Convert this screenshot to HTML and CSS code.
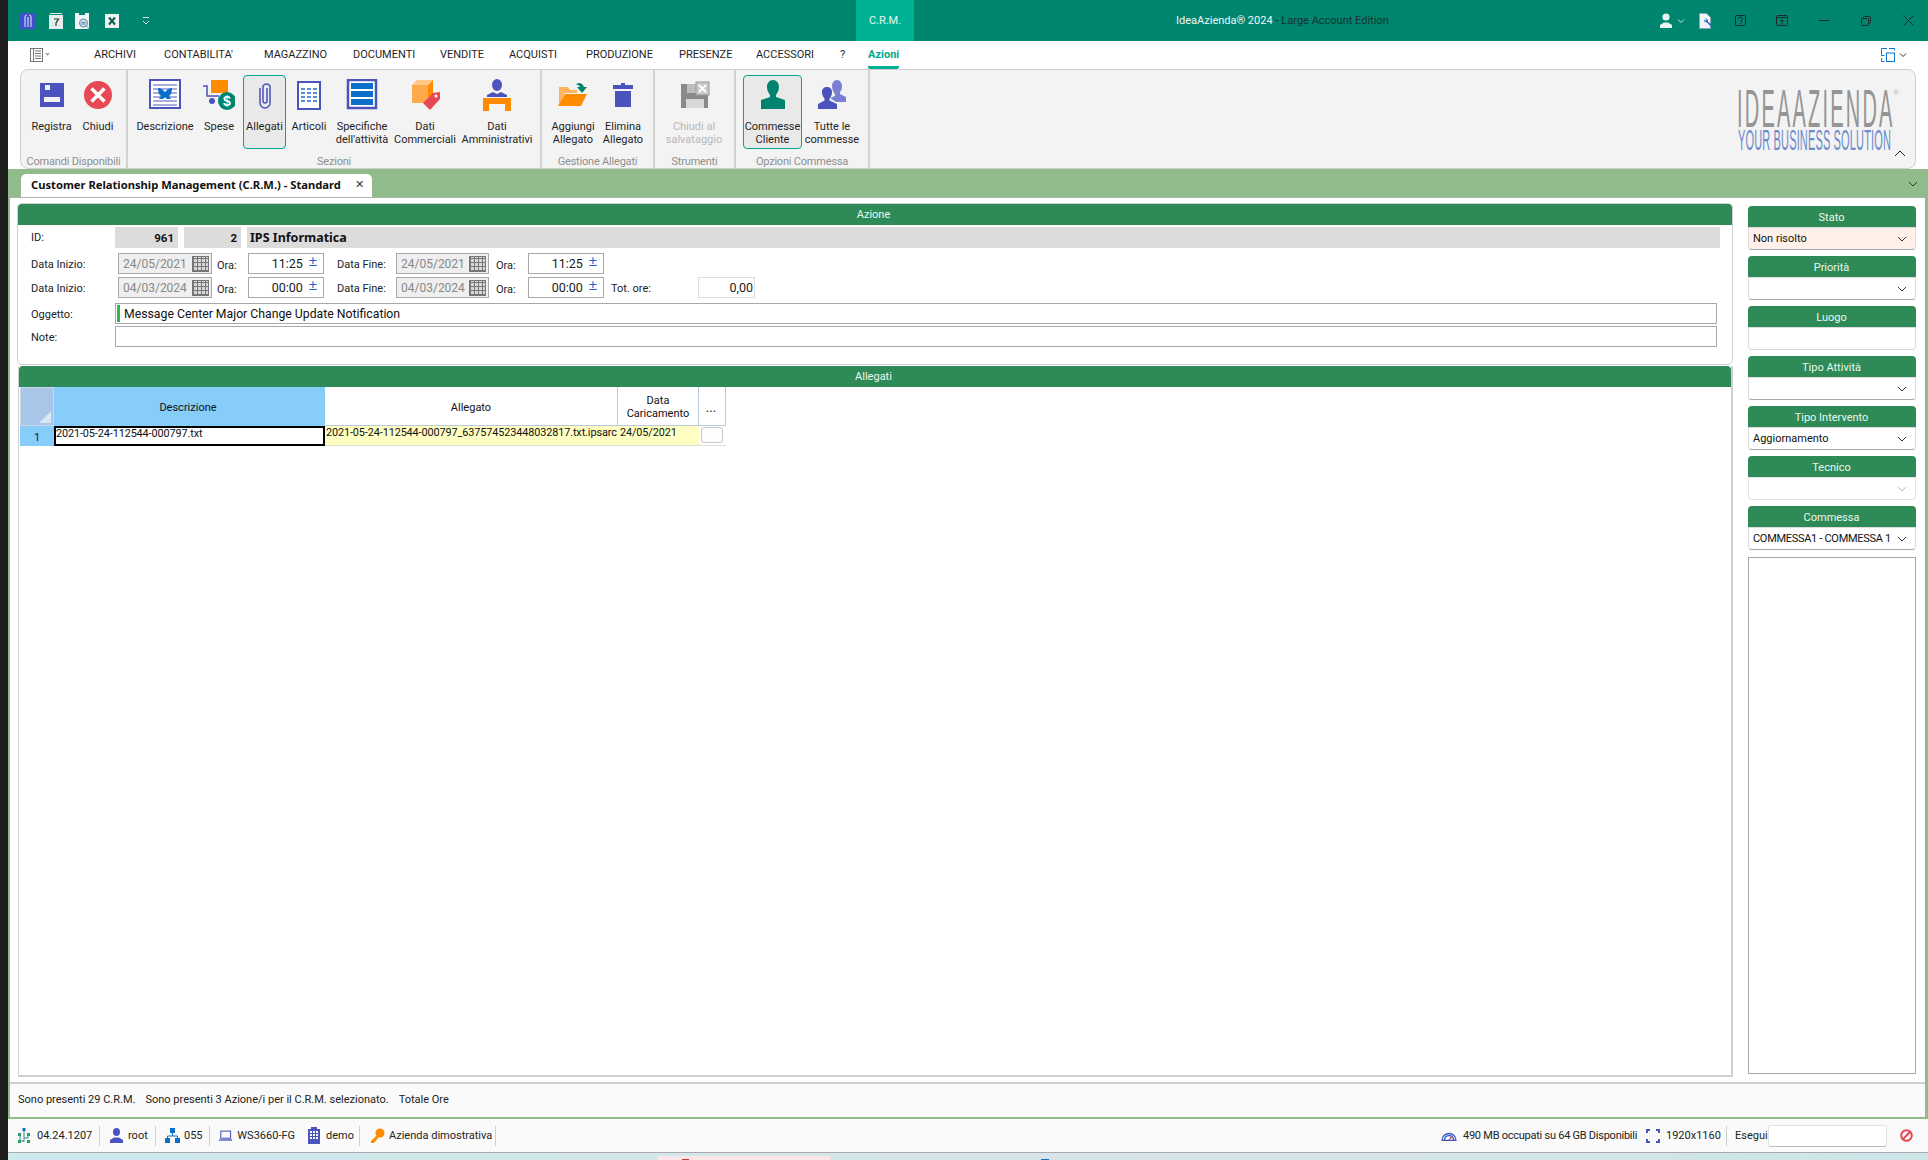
FILE: index.html
```html
<!DOCTYPE html>
<html lang="it">
<head>
<meta charset="utf-8">
<title>IdeaAzienda</title>
<link rel="stylesheet" href="styles.css">
</head>
<body>
<div class="screen">
  <div class="edge"></div>
  <div class="app">
    <header class="titlebar">
      <div class="quick">
        <svg class="q" width="16" height="16" viewBox="0 0 16 16"><rect width="16" height="16" fill="#3f51c8"/><path d="M5 14V4a2 2 0 0 1 2-2M8 14V4M11 14V4a2 2 0 0 0-2-2" stroke="#cfd4f5" fill="none" stroke-width="1.2"/></svg>
        <svg class="q q2" width="14" height="16" viewBox="0 0 14 16"><path d="M0 2h14v14H0z" fill="#e4eeec"/><path d="M1 .5h12" stroke="#e4eeec"/><path d="M5 6h4.500L7 10v3" stroke="#333" fill="none" stroke-width="1.200"/></svg>
        <svg class="q q3" width="16" height="18" viewBox="0 0 16 18"><path d="M0 0h4v2h6V0h4v16H0z" fill="#f2f5f5"/><circle cx="8.500" cy="10" r="4" fill="#cfe0e8" stroke="#5b8ab0"/><path d="M6.500 9.500h4M6.500 11h4M11.500 13l3 3" stroke="#5b8ab0"/></svg>
        <svg class="q q4" width="14" height="14" viewBox="0 0 14 14"><rect width="14" height="14" fill="#eef3f2"/><path d="M4 3.500l6 7M10 3.500l-6 7" stroke="#0f5c4c" stroke-width="2"/></svg>
        <svg class="q q5" width="10" height="10" viewBox="0 0 10 10"><path d="M2 1.500h6M2 5l3 3 3-3" stroke="#d9ece8" fill="none"/></svg>
      </div>
      <div class="module">C.R.M.</div>
      <div class="apptitle"><span class="light">IdeaAzienda® 2024</span> - Large Account Edition</div>
      <div class="winbtns">
        <svg width="12" height="15" viewBox="0 0 12 15"><circle cx="6" cy="4" r="3.600" fill="#e8f3f0"/><path d="M0 15v-3l4-2.500h4l4 2.500v3z" fill="#e8f3f0"/></svg>
        <svg width="8" height="6" viewBox="0 0 8 6"><path d="M1 1.500l3 3 3-3" stroke="#cfe5e0" fill="none"/></svg>
        <svg width="14" height="16" viewBox="0 0 14 16"><path d="M.5.500h7l4 4v11h-11z" fill="#f2f5f8" stroke="#8fa3b5"/><path d="M5 6.500a2.500 2.500 0 0 0 3 3l4 4.500 1.500-1.500-4.500-4a2.500 2.500 0 0 0-3-3l1.500 1.500-.5 1z" fill="#2f6fc0"/></svg>
        <svg width="11" height="11" viewBox="0 0 11 11"><rect x=".5" y=".5" width="10" height="10" rx="1" fill="none" stroke="#1c2a28"/><path d="M3.500 4a2 2 0 1 1 2.500 2v1M5.500 8v1" stroke="#1c2a28" fill="none"/></svg>
        <svg width="12" height="11" viewBox="0 0 12 11"><rect x=".5" y=".5" width="11" height="10" rx="1" fill="none" stroke="#1c2a28"/><path d="M.5 2.500h11M6 9.500v-5M4 6.500l2-2 2 2" stroke="#1c2a28" fill="none"/></svg>
        <svg width="10" height="2" viewBox="0 0 10 2"><path d="M0 .5h10" stroke="#1c2a28"/></svg>
        <svg width="10" height="10" viewBox="0 0 10 10"><rect x=".5" y="2.500" width="7" height="7" rx="1" fill="none" stroke="#1c2a28"/><path d="M2.500 2.500v-1a1 1 0 0 1 1-1h5a1 1 0 0 1 1 1v5a1 1 0 0 1-1 1h-1" fill="none" stroke="#1c2a28"/></svg>
        <svg width="11" height="11" viewBox="0 0 11 11"><path d="M.5.500l10 10M10.500.500l-10 10" stroke="#1c2a28"/></svg>
      </div>
    </header>

    <nav class="menubar">
      <svg class="menuicon" width="20" height="14" viewBox="0 0 20 14"><rect x=".5" y=".5" width="12" height="13" fill="none" stroke="#777"/><path d="M.5.500h3v13h-3zM5 3h6M5 5.500h6M5 8h6M5 10.500h6" stroke="#777" fill="none"/><path d="M15 5h5l-2.500 3z" fill="#aaa"/></svg>
      <span class="mi m70">ARCHIVI</span>
      <span class="mi m100">CONTABILITA'</span>
      <span class="mi m89">MAGAZZINO</span>
      <span class="mi m87">DOCUMENTI</span>
      <span class="mi m69">VENDITE</span>
      <span class="mi m77">ACQUISTI</span>
      <span class="mi m93">PRODUZIONE</span>
      <span class="mi m77">PRESENZE</span>
      <span class="mi m84">ACCESSORI</span>
      <span class="mi m28">?</span>
      <span class="mi active">Azioni</span>
      <span class="layout">
        <svg width="14" height="14" viewBox="0 0 14 14"><path d="M6 .5H.5v7h3M8 .5h5.500v2M.5 10v3.500h3" fill="none" stroke="#0a78d7"/><rect x="5.500" y="5" width="8" height="8.500" fill="#fff" stroke="#0a78d7"/></svg>
        <svg width="8" height="6" viewBox="0 0 8 6"><path d="M1 1.500l3 3 3-3" stroke="#333" fill="none"/></svg>
      </span>
    </nav>

    <section class="ribbonwrap">
      <div class="ribbon">
        <div class="group g1">
          <div class="btns">
            <div class="rb w61">
              <svg class="ic" viewBox="0 0 32 32"><path d="M4 4h24v24H4zM9 6v5h5V6zM8 18v5h16v-5z" fill="#4b53bc" fill-rule="evenodd"/></svg>
              <span class="rt">Registra</span>
            </div>
            <div class="rb w32">
              <svg class="ic" viewBox="0 0 32 32"><circle cx="16" cy="16" r="14" fill="#e74856"/><path d="M9.500 9.500l13 13M22.500 9.500l-13 13" stroke="#fff" stroke-width="3.500"/></svg>
              <span class="rt">Chiudi</span>
            </div>
          </div>
          <div class="gl">Comandi Disponibili</div>
        </div>
        <div class="group g2">
          <div class="btns">
            <div class="rb w74">
              <svg class="ic" viewBox="0 0 32 32"><rect x="1" y="1" width="30" height="28" fill="#fff" stroke="#4b53bc" stroke-width="2"/><path d="M4 6h24M4 10h24M4 14h24M4 18h24M4 22h24M4 26h24" stroke="#a9acdf" stroke-width="2"/><path d="M9 9c3 0 5 2 7 4 2-2 4-4 7-4 0 4-1 7-3 8l2 3h-4l-2-2-2 2h-4l2-3c-2-1-3-4-3-8z" fill="#0a6fc9"/></svg>
              <span class="rt">Descrizione</span>
            </div>
            <div class="rb w34 mr7">
              <svg class="ic" viewBox="0 0 32 32"><rect x="8" y="1" width="17" height="13" fill="#ff8c00"/><path d="M0 7h4v10h12" fill="none" stroke="#4b53bc" stroke-width="1.500"/><circle cx="9" cy="22" r="3" fill="#4b53bc"/><circle cx="24" cy="22" r="9" fill="#00836f"/><text class="dollar" x="24" y="27">$</text></svg>
              <span class="rt">Spese</span>
            </div>
            <div class="rb w43 sel">
              <svg class="ic" viewBox="0 0 32 32"><path d="M11 8v15a5 5 0 0 0 10 0V6a4 4 0 0 0-7 0v15a2 2 0 0 0 4 0V8" transform="translate(0 1)" fill="none" stroke="#4b53bc" stroke-width="1.500"/></svg>
              <span class="rt">Allegati</span>
            </div>
            <div class="rb w46">
              <svg class="ic" viewBox="0 0 32 32"><rect x="5" y="3" width="22" height="27" fill="#fff" stroke="#4b53bc" stroke-width="2"/><path d="M8 9h4v2H8zM14 9h4v2h-4zM20 9h4v2h-4zM8 13h4v2H8zM14 13h4v2h-4zM20 13h4v2h-4zM8 17h4v2H8zM14 17h4v2h-4zM20 17h4v2h-4zM8 21h4v2H8zM14 21h4v2h-4zM20 21h4v2h-4z" fill="#5a8fd8"/></svg>
              <span class="rt">Articoli</span>
            </div>
            <div class="rb w60">
              <svg class="ic" viewBox="0 0 32 32"><rect x="2" y="1" width="28" height="28" fill="#fff" stroke="#4b53bc" stroke-width="2.500"/><path d="M5 4h22v6H5zM5 12h22v6H5zM5 20h22v6H5z" fill="#0a6fc9"/></svg>
              <span class="rt">Specifiche dell'attività</span>
            </div>
            <div class="rb w66">
              <svg class="ic" viewBox="0 0 32 32"><path d="M3 6h16v18H3z" fill="#ffa94d"/><path d="M3 6l5-5h16l-5 5z" fill="#ffc98a"/><path d="M19 6l5-5v14l-5 6z" fill="#ff8c00"/><path d="M14 24l10-10 7-1 0 7-10 11z" fill="#e74856"/><circle cx="27" cy="17" r="1.500" fill="#fff"/></svg>
              <span class="rt">Dati Commerciali</span>
            </div>
            <div class="rb w78">
              <svg class="ic" viewBox="0 0 32 32"><ellipse cx="16" cy="6" rx="5" ry="6" fill="#4b53bc"/><path d="M6 18v-2l6-3 4 2 4-2 6 3v2z" fill="#4b53bc"/><path d="M2 19h28v13h-6v-7H8v7H2z" fill="#ff8c00"/></svg>
              <span class="rt">Dati Amministrativi</span>
            </div>
          </div>
          <div class="gl">Sezioni</div>
        </div>
        <div class="group g3">
          <div class="btns">
            <div class="rb w62">
              <svg class="ic" viewBox="0 0 32 32"><path d="M2 26V8h9l2 3h7v3H8z" fill="#ffb45c"/><path d="M8 15h22l-6 12H1z" fill="#ff8c00"/><path d="M18 6c3-3 7-3 9 2h3l-5 6-5-6h3c-1-2-3-3-5-2z" fill="#00836f"/></svg>
              <span class="rt">Aggiungi Allegato</span>
            </div>
            <div class="rb w38">
              <svg class="ic" viewBox="0 0 32 32"><path d="M6 6h20v4H6zM14 4h4v2h-4zM8 12h16v16H8z" fill="#4b53bc"/></svg>
              <span class="rt">Elimina Allegato</span>
            </div>
          </div>
          <div class="gl">Gestione Allegati</div>
        </div>
        <div class="group g4">
          <div class="btns">
            <div class="rb w78 off">
              <svg class="ic" viewBox="0 0 32 32"><path d="M3 5h22v4h5v20H3z" fill="#8a8a8a"/><path d="M9 5h11v9H9z" fill="#bdbdbd"/><path d="M8 20h18v9H8z" fill="#d8d8d8"/><rect x="18" y="3" width="13" height="13" fill="#c9c9c9" stroke="#999"/><path d="M21 6l7 7M28 6l-7 7" stroke="#fff" stroke-width="2"/></svg>
              <span class="rt">Chiudi al salvataggio</span>
            </div>
          </div>
          <div class="gl">Strumenti</div>
        </div>
        <div class="group g5">
          <div class="btns">
            <div class="rb w59 ml7 sel">
              <svg class="ic" viewBox="0 0 32 32"><path d="M10 8c0-4 2.500-7 6-7s6 3 6 7c0 3-1.500 6-3 8v2l9 3v9H4v-9l9-3v-2c-1.500-2-3-5-3-8z" fill="#00836f"/></svg>
              <span class="rt">Commesse Cliente</span>
            </div>
            <div class="rb w60">
              <svg class="ic" viewBox="0 0 32 32"><path d="M16 7c0-3 2-6 5-6s5 3 5 6c0 3-1 5-2 6v2l6 3v5H20l-6-4 5-2v-2c-1-1-3-4-3-8z" fill="#7a7fd4"/><path d="M6 13c0-3 2-5 5-5s5 2 5 5-1 5-2.500 6.500v2L21 25v5H2v-5l6.500-3.500v-2C7 18 6 16 6 13z" fill="#4b53bc"/></svg>
              <span class="rt">Tutte le commesse</span>
            </div>
          </div>
          <div class="gl">Opzioni Commessa</div>
        </div>
        <div class="logo">
          <span class="logo1">IDEAAZIENDA</span>
          <span class="logor">®</span>
          <span class="logo2">YOUR BUSINESS SOLUTION</span>
        </div>
        <svg class="collapse" width="12" height="7" viewBox="0 0 12 7"><path d="M1 6l5-5 5 5" fill="none" stroke="#222"/></svg>
      </div>
    </section>

    <div class="workspace">
      <div class="tabstrip">
        <div class="tab"><span class="tabtext">Customer Relationship Management (C.R.M.) - Standard</span><span class="tabx">✕</span></div>
        <svg class="tabmore" width="10" height="6" viewBox="0 0 10 6"><path d="M1 1l4 4 4-4" fill="none" stroke="#333"/></svg>
      </div>
      <div class="frame">
        <div class="mainrow">
          <div class="leftcol">
            <section class="panel p1">
              <h2 class="phead">Azione</h2>
              <div class="idrow">
                <span class="lb id">ID:</span>
                <span class="ro n1">961</span>
                <span class="ro n2">2</span>
                <span class="ro name">IPS Informatica</span>
              </div>
              <div class="dates">
                <span class="lb">Data Inizio:</span>
                <span class="date"><span>24/05/2021</span><i class="cal"></i></span>
                <span class="lb ora">Ora:</span>
                <span class="time"><span>11:25</span><b class="spin">±</b></span>
                <span class="lb fine">Data Fine:</span>
                <span class="date"><span>24/05/2021</span><i class="cal"></i></span>
                <span class="lb ora2">Ora:</span>
                <span class="time"><span>11:25</span><b class="spin">±</b></span>
              </div>
              <div class="dates d2">
                <span class="lb">Data Inizio:</span>
                <span class="date"><span>04/03/2024</span><i class="cal"></i></span>
                <span class="lb ora">Ora:</span>
                <span class="time"><span>00:00</span><b class="spin">±</b></span>
                <span class="lb fine">Data Fine:</span>
                <span class="date"><span>04/03/2024</span><i class="cal"></i></span>
                <span class="lb ora2">Ora:</span>
                <span class="time"><span>00:00</span><b class="spin">±</b></span>
                <span class="lb tot">Tot. ore:</span>
                <span class="total">0,00</span>
              </div>
              <div class="textrow ogg">
                <span class="lb">Oggetto:</span>
                <span class="inp"><i class="greenbar"></i>Message Center Major Change Update Notification</span>
              </div>
              <div class="textrow note">
                <span class="lb">Note:</span>
                <span class="inp"></span>
              </div>
            </section>
            <section class="panel p2">
              <h2 class="phead">Allegati</h2>
              <div class="grid">
                <div class="corner"><i class="tri"></i></div>
                <div class="gh cur">Descrizione</div>
                <div class="gh">Allegato</div>
                <div class="gh">Data<br>Caricamento</div>
                <div class="gh dots">...</div>
                <div class="rowh">1</div>
                <div class="cell edit">2021-05-24-112544-000797.txt</div>
                <div class="cell yl">2021-05-24-112544-000797_637574523448032817.txt.ipsarc</div>
                <div class="cell yl dt">24/05/2021</div>
                <div class="cell act"><span class="mini"></span></div>
              </div>
            </section>
          </div>
          <aside class="side">
            <div class="fld"><h3 class="fh">Stato</h3><div class="combo pink"><span>Non risolto</span><svg class="cv" width="10" height="6" viewBox="0 0 10 6"><path d="M1 1l4 4 4-4" fill="none" stroke="#333"/></svg></div></div>
            <div class="fld"><h3 class="fh">Priorità</h3><div class="combo"><span></span><svg class="cv" width="10" height="6" viewBox="0 0 10 6"><path d="M1 1l4 4 4-4" fill="none" stroke="#333"/></svg></div></div>
            <div class="fld"><h3 class="fh">Luogo</h3><div class="combo plain"></div></div>
            <div class="fld"><h3 class="fh">Tipo Attività</h3><div class="combo"><span></span><svg class="cv" width="10" height="6" viewBox="0 0 10 6"><path d="M1 1l4 4 4-4" fill="none" stroke="#333"/></svg></div></div>
            <div class="fld"><h3 class="fh">Tipo Intervento</h3><div class="combo"><span>Aggiornamento</span><svg class="cv" width="10" height="6" viewBox="0 0 10 6"><path d="M1 1l4 4 4-4" fill="none" stroke="#333"/></svg></div></div>
            <div class="fld"><h3 class="fh">Tecnico</h3><div class="combo dis"><span></span><svg class="cv" width="10" height="6" viewBox="0 0 10 6"><path d="M1 1l4 4 4-4" fill="none" stroke="#bbb"/></svg></div></div>
            <div class="fld"><h3 class="fh">Commessa</h3><div class="combo"><span class="tight">COMMESSA1 - COMMESSA 1</span><svg class="cv" width="10" height="6" viewBox="0 0 10 6"><path d="M1 1l4 4 4-4" fill="none" stroke="#333"/></svg></div></div>
            <div class="listbox"></div>
          </aside>
        </div>
        <div class="status">
          <span>Sono presenti 29 C.R.M.</span>
          <span>Sono presenti 3 Azione/i per il C.R.M. selezionato.</span>
          <span>Totale Ore</span>
        </div>
      </div>
    </div>

    <footer class="footer">
      <div class="fi f1">
        <svg width="12" height="16" viewBox="0 0 12 16"><path d="M6 3v11M2 7v6h4M10 7v3H6" fill="none" stroke="#2a8f8a"/><rect x="4.500" y="0" width="3" height="3" fill="#0a6fc9"/><rect x="0" y="5" width="3" height="3" fill="#2a9f6a"/><rect x="9" y="5" width="3" height="3" fill="#2a9f6a"/><rect x="0" y="12" width="3" height="3" fill="#2a9f6a"/><rect x="9" y="12" width="3" height="3" fill="#2a9f6a"/></svg>
        <span>04.24.1207</span>
      </div>
      <div class="fi f2">
        <svg width="13" height="15" viewBox="0 0 13 15"><ellipse cx="6.500" cy="4" rx="3.500" ry="4" fill="#4b53bc"/><path d="M0 15v-3l4-2.500h5l4 2.500v3z" fill="#4b53bc"/></svg>
        <span>root</span>
      </div>
      <div class="fi f3">
        <svg width="15" height="15" viewBox="0 0 15 15"><path d="M5 0h5v5H5zM0 10h5v5H0zM10 10h5v5h-5z" fill="#0a6fc9"/><path d="M7.500 5v3M2.500 10V8h10v2" fill="none" stroke="#0a6fc9"/></svg>
        <span>055</span>
      </div>
      <div class="fi f4">
        <svg width="15" height="12" viewBox="0 0 15 12"><rect x="2" y=".5" width="11" height="8" fill="none" stroke="#4b53bc" stroke-width="1.200"/><path d="M0 10.500h15" stroke="#4b53bc" stroke-width="1.500"/></svg>
        <span>WS3660-FG</span>
      </div>
      <div class="fi f5">
        <svg width="12" height="17" viewBox="0 0 12 17"><path d="M0 2h3V0h6v2h3v15H0z" fill="#4b53bc"/><path d="M2 4h2v2H2zM5 4h2v2H5zM8 4h2v2H8zM2 7h2v2H2zM5 7h2v2H5zM8 7h2v2H8zM2 10h2v2H2zM5 10h2v2H5zM8 10h2v2H8z" fill="#fff"/></svg>
        <span>demo</span>
      </div>
      <div class="fi f6">
        <svg width="15" height="15" viewBox="0 0 15 15"><circle cx="10" cy="5" r="4.500" fill="#ff8c00"/><path d="M7 7L1 13v2h3l5-6z" fill="#ff8c00"/></svg>
        <span>Azienda dimostrativa</span>
      </div>
      <div class="fright">
        <svg width="16" height="11" viewBox="0 0 16 11"><path d="M1 10.500a7 7 0 1 1 14 0z" fill="#fff" stroke="#4b53bc" stroke-width="1.300"/><path d="M3.500 10a4.500 4.500 0 0 1 9 0" fill="none" stroke="#0a6fc9" stroke-width="1.500"/><path d="M8 10l3-4" stroke="#e74856" stroke-width="1.300"/></svg>
        <span class="mem">490 MB occupati su 64 GB Disponibili</span>
        <svg class="res" width="14" height="14" viewBox="0 0 14 14"><path d="M4 1H1v3M10 1h3v3M4 13H1v-3M10 13h3v-3" fill="none" stroke="#4b53bc" stroke-width="2"/></svg>
        <span class="resv">1920x1160</span>
        <span class="esegui">Esegui</span>
        <span class="run"></span>
        <svg class="ban" width="13" height="13" viewBox="0 0 13 13"><circle cx="6.500" cy="6.500" r="5.300" fill="none" stroke="#e74856" stroke-width="2"/><path d="M3 10l7-7" stroke="#e74856" stroke-width="2"/></svg>
      </div>
    </footer>
    <div class="desk">
      <div class="desk-a"><i class="dot-r"></i></div>
      <i class="dot-b"></i>
    </div>
  </div>
</div>
</body>
</html>
```

FILE: styles.css
```css
* { box-sizing: border-box; }
html, body { margin: 0; padding: 0; height: 100%; overflow: hidden; }
body { font-family: Roboto, "Noto Sans", sans-serif; font-size: 11px; color: #1c1c1c; background: #1e1e1e; }
.screen { display: flex; width: 1928px; height: 1160px; }
.edge { width: 8px; background: #1e1e1e; flex: none; }
.app { flex: 1; display: flex; flex-direction: column; min-width: 0; background: #fff; }

/* title bar */
.titlebar { height: 41px; background: #00856f; display: flex; align-items: stretch; flex: none; }
.quick { width: 848px; flex: none; display: flex; align-items: center; padding-left: 12px; }
.q2 { margin-left: 13px; }
.q3 { margin-left: 12px; margin-top: 2px; }
.q4 { margin-left: 14px; }
.q5 { margin-left: 22px; }
.module { width: 58px; flex: none; background: #00b294; color: #e8f8f4; display: flex; align-items: center; justify-content: center; font-size: 11px; padding-bottom: 1px; }
.apptitle { margin-left: 262px; width: 400px; flex: none; display: flex; align-items: center; gap: 3px; color: #17332d; font-size: 11px; white-space: nowrap; }
.apptitle .light { color: #f0f7f5; }
.winbtns { margin-left: auto; display: grid; grid-template-columns: 24px 6px 44px 24px 59px 26px 57px 28px; justify-items: center; align-items: center; padding-right: 6px; }

/* menu */
.menubar { height: 28px; flex: none; display: flex; align-items: center; position: relative; padding-left: 22px; }
.menuicon { margin-right: 44px; flex: none; }
.mi { font-size: 11px; color: #1f1f1f; line-height: 28px; white-space: nowrap; flex: none; }
.m28 { width: 28px; }
.m69 { width: 69px; }
.m70 { width: 70px; }
.m77 { width: 77px; }
.m84 { width: 84px; }
.m87 { width: 87px; }
.m89 { width: 89px; }
.m93 { width: 93px; }
.m100 { width: 100px; }
.mi.active { color: #00a98d; font-weight: 700; border-bottom: 3px solid #00b294; line-height: 28px; height: 28px; border-radius: 0 0 2px 2px; }
.layout { margin-left: auto; margin-right: 21px; display: flex; align-items: center; gap: 4px; }

/* ribbon */
.ribbonwrap { height: 100px; flex: none; padding: 0 12px; }
.ribbon { height: 100px; border: 1px solid #cfcfcf; border-radius: 8px; background: #f3f3f3; display: flex; position: relative; }
.group { display: flex; flex-direction: column; border-right: 2px solid #d2d2d2; flex: none; }
.g1 { width: 107px; }
.g2 { width: 414px; }
.g3 { width: 113px; }
.g4 { width: 81px; }
.g5 { width: 134px; }
.btns { display: flex; height: 79px; padding-top: 5px; }
.gl { text-align: center; color: #8f8f8f; font-size: 11px; letter-spacing: -.2px; line-height: 14px; padding-top: 6px; white-space: nowrap; }
.rb { height: 74px; display: flex; flex-direction: column; align-items: center; flex: none; border: 1px solid transparent; border-radius: 4px; }
.ic { width: 32px; height: 32px; margin-top: 3px; flex: none; }
.rt { margin-top: 9px; text-align: center; line-height: 13px; font-size: 11px; color: #1f1f1f; white-space: normal; }
.off .rt { color: #b8b8b8; }
.sel { background: #e9e9e9; border-color: #00a88c; }
.w32 { width: 32px; }
.w34 { width: 34px; }
.w38 { width: 38px; }
.w43 { width: 43px; }
.w46 { width: 46px; }
.w59 { width: 59px; }
.w60 { width: 60px; }
.w61 { width: 61px; }
.w62 { width: 62px; }
.w66 { width: 66px; }
.w74 { width: 74px; }
.w78 { width: 78px; }
.mr7 { margin-right: 7px; }
.ml7 { margin-left: 7px; }
.dollar { font: 700 14px "Liberation Sans", sans-serif; fill: #fff; text-anchor: middle; }
.logo { position: absolute; left: 1716px; top: 20px; width: 162px; height: 60px; }
.logo1 { position: absolute; left: 0; top: 0; font: 20px/14px "Liberation Sans", sans-serif; color: #959595; letter-spacing: 2.200px; transform: scaleY(2.650); transform-origin: 0 0; white-space: nowrap; }
.logo2 { position: absolute; left: 1px; top: 39px; font: 11px/8px "Liberation Sans", sans-serif; color: #6d8bcb; letter-spacing: .15px; transform: scaleY(2.600); transform-origin: 0 0; white-space: nowrap; }
.logor { position: absolute; left: 156px; top: -1px; font: 8px/8px "Liberation Sans", sans-serif; color: #bbb; }
.collapse { position: absolute; right: 9px; top: 80px; }

/* workspace */
.workspace { height: 950px; flex: none; background: #90bb8b; padding: 0 3px 2px 2px; display: flex; flex-direction: column; }
.tabstrip { height: 28px; flex: none; position: relative; padding: 5px 0 0 11px; }
.tab { width: 351px; height: 23px; background: #fff; border-radius: 5px 5px 0 0; display: flex; align-items: center; padding: 0 0 2px 10px; }
.tabtext { font: 700 11.200px "Noto Sans", sans-serif; width: 324px; white-space: nowrap; color: #111; }
.tabx { font-size: 11px; color: #333; }
.tabmore { position: absolute; right: 7px; top: 12px; }
.frame { flex: 1; background: #fafafa; border-top: 1px solid #aab5a8; display: flex; flex-direction: column; min-height: 0; }
.mainrow { height: 886px; flex: none; background: #fff; border-bottom: 2px solid #d0d0d0; display: flex; padding: 5px 0 0 7px; }
.leftcol { width: 1716px; flex: none; display: flex; flex-direction: column; }

.panel { background: #fff; border: 1px solid #cfcfcf; border-radius: 5px 5px 0 0; }
.p1 { height: 162px; border-radius: 5px; flex: none; }
.p2 { height: 711px; margin: 1px 0 0 1px; width: 1715px; flex: none; border-right: 2px solid #cfcfcf; border-bottom: 2px solid #cfcfcf; border-top: 0; border-radius: 0; }
.phead { margin: 0; height: 21px; background: #2e8b57; color: #ecf7f1; font-size: 11px; font-weight: 400; line-height: 22px; text-align: center; padding-right: 3px; border-radius: 4px 4px 0 0; }
.lb { color: #222; white-space: nowrap; }
.idrow { display: flex; height: 21px; margin-top: 2px; align-items: stretch; padding-left: 13px; font-weight: 700; font-size: 11.5px; }
.idrow .id { width: 84px; font-weight: 400; font-size: 11px; line-height: 22px; }
.ro { background: #dcdcdc; display: block; line-height: 23px; text-align: right; padding-right: 4px; color: #111; }
.n1 { width: 63px; }
.n2 { width: 57px; margin-left: 6px; }
.name { width: 1473px; margin-left: 6px; text-align: left; padding-left: 3px; font: 700 12.500px/22px "Noto Sans", sans-serif; }
.dates { display: grid; grid-template-columns: 87px 94px 36px 76px 72px 93px 39px 76px 94px 57px; height: 21px; margin-top: 5px; padding-left: 13px; align-items: center; }
.dates .lb { padding-top: 1px; }
.dates.d2 { margin-top: 3px; }
.dates .ora { padding-left: 5px; padding-top: 3px; }
.dates .fine { padding-left: 13px; }
.dates .ora2 { padding-left: 7px; padding-top: 3px; }
.dates .tot { padding-left: 7px; }
.date { height: 21px; border: 1px solid #a8a8a8; background: #efefef; color: #888; font-size: 12px; display: flex; align-items: center; justify-content: space-between; padding: 0 2px 0 4px; }
.cal { width: 17px; height: 16px; display: block; background: repeating-linear-gradient(90deg, #777 0 1px, transparent 1px 4px), repeating-linear-gradient(0deg, #777 0 1px, #d8d8d8 1px 4px); border: 1px solid #777; }
.time { height: 21px; border: 1px solid #a8a8a8; background: #fff; font-size: 12.5px; display: flex; align-items: center; justify-content: flex-end; padding-right: 6px; }
.spin { color: #1f5fd0; font: 400 15px/16px "Liberation Sans", sans-serif; margin-left: 6px; margin-top: -5px; }
.total { height: 21px; border: 1px solid #dedede; font-size: 12.5px; text-align: right; padding-right: 1px; line-height: 19px; }
.textrow { display: flex; height: 21px; padding-left: 13px; align-items: center; }
.ogg { margin-top: 5px; }
.note { margin-top: 2px; }
.textrow .lb { width: 84px; padding-top: 1px; }
.inp { width: 1602px; height: 21px; border: 1px solid #a8a8a8; background: #fff; display: flex; align-items: center; font-size: 12.25px; color: #111; padding-left: 1px; }
.greenbar { width: 3px; height: 17px; background: #2fb84a; margin-right: 4px; }

.grid { display: grid; grid-template-columns: 34px 271px 293px 81px 27px; grid-template-rows: 39px 20px; width: 706px; margin: 0 0 0 1px; }
.corner { background: #a9c5e8; border: 1px solid #c9d8ec; position: relative; }
.tri { position: absolute; right: 2px; bottom: 2px; border-style: solid; border-width: 0 0 12px 12px; border-color: transparent transparent #dbe6f4 transparent; }
.gh { display: flex; align-items: center; justify-content: center; text-align: center; border-right: 1px solid #b9c9dd; border-bottom: 1px solid #b9c9dd; line-height: 13px; color: #111; padding-top: 2px; }
.gh.cur { background: #87cdf9; border: 0; padding-right: 3px; }
.gh.dots { padding: 3px 2px 0 0; font-size: 13px; }
.rowh { background: #87cdf9; display: flex; align-items: center; justify-content: center; padding-top: 2px; }
.cell { font-size: 10.85px; letter-spacing: -.1px; line-height: 14px; white-space: nowrap; color: #111; overflow: hidden; }
.edit { border: 2px solid #000; background: #fff; padding-left: 0; line-height: 12px; }
.yl { background: #ffffc4; padding: 0 0 0 1px; border-bottom: 1px solid #dcdcdc; }
.cell.dt { padding-left: 2px; }
.act { background: #fff; border-bottom: 1px solid #dcdcdc; padding: 1px 1px 0 2px; }
.mini { display: block; width: 22px; height: 16px; background: #fdfdfd; border: 1px solid #c8c8c8; border-radius: 3px; }

/* side column */
.side { margin-left: 15px; width: 168px; flex: none; padding-top: 3px; display: flex; flex-direction: column; gap: 6px; }
.fld { height: 44px; flex: none; border-radius: 4px; }
.fh { margin: 0; height: 21px; background: #2e8b57; color: #ecf7f1; font-size: 11px; font-weight: 400; line-height: 23px; text-align: center; padding-right: 1px; border-radius: 4px 4px 0 0; }
.combo { height: 23px; margin-top: 0; border: 1px solid #dcdcdc; border-bottom-color: #a8a8a8; border-radius: 0 0 4px 4px; display: flex; align-items: center; justify-content: space-between; padding: 0 8px 0 4px; background: #fff; color: #111; white-space: nowrap; font-size: 11px; }
.tight { letter-spacing: -.3px; }
.cv { flex: none; }
.pink { background: #fff1ea; }
.plain { border-bottom-color: #d4d4d4; }
.dis { border-color: #e2e2e2; }
.listbox { margin-top: 1px; height: 517px; border: 1px solid #a8a8a8; background: #fff; flex: none; }

.status { flex: 1; display: flex; align-items: center; gap: 10px; padding: 0 0 3px 8px; color: #222; background: #fafafa; }

/* footer */
.footer { height: 34px; flex: none; background: #fafafa; border-bottom: 1px solid #aaa; display: flex; align-items: center; padding: 0 0 0 10px; color: #222; position: relative; white-space: nowrap; }
.fi { display: flex; align-items: center; gap: 5px; height: 20px; border-right: 1px solid #d0d0d0; flex: none; }
.f1 { width: 82px; gap: 7px; }
.f2 { width: 56px; padding-left: 10px; }
.f3 { width: 54px; padding-left: 9px; gap: 4px; }
.f4 { width: 85px; padding-left: 9px; border-right: 0; }
.f5 { width: 65px; padding-left: 13px; gap: 6px; }
.f6 { width: 136px; padding-left: 10px; gap: 4px; }
.fright { margin-left: auto; display: flex; align-items: center; height: 20px; }
.mem { margin-left: 6px; width: 171px; letter-spacing: -.25px; }
.res { margin-left: 12px; }
.resv { margin-left: 6px; width: 61px; border-right: 1px solid #d0d0d0; line-height: 20px; }
.esegui { margin-left: 8px; width: 30px; }
.run { margin-left: 3px; width: 119px; height: 22px; background: #fff; border: 1px solid #e2e2e2; border-bottom-color: #bbb; border-radius: 3px; }
.ban { margin: 0 15px 0 13px; }

.desk { height: 7px; flex: none; background: linear-gradient(90deg, #cdeaee, #d8e4ea 60%, #cde6ea); position: relative; display: flex; align-items: flex-end; overflow: hidden; }
.desk-a { margin-left: 649px; width: 174px; height: 4px; background: #fde6e8; border-radius: 4px 4px 0 0; position: relative; }
.dot-r { position: absolute; left: 25px; bottom: 0; width: 7px; height: 1px; background: #c33; }
.dot-b { margin-left: 210px; width: 8px; height: 1px; background: #1a6fc0; }
```
